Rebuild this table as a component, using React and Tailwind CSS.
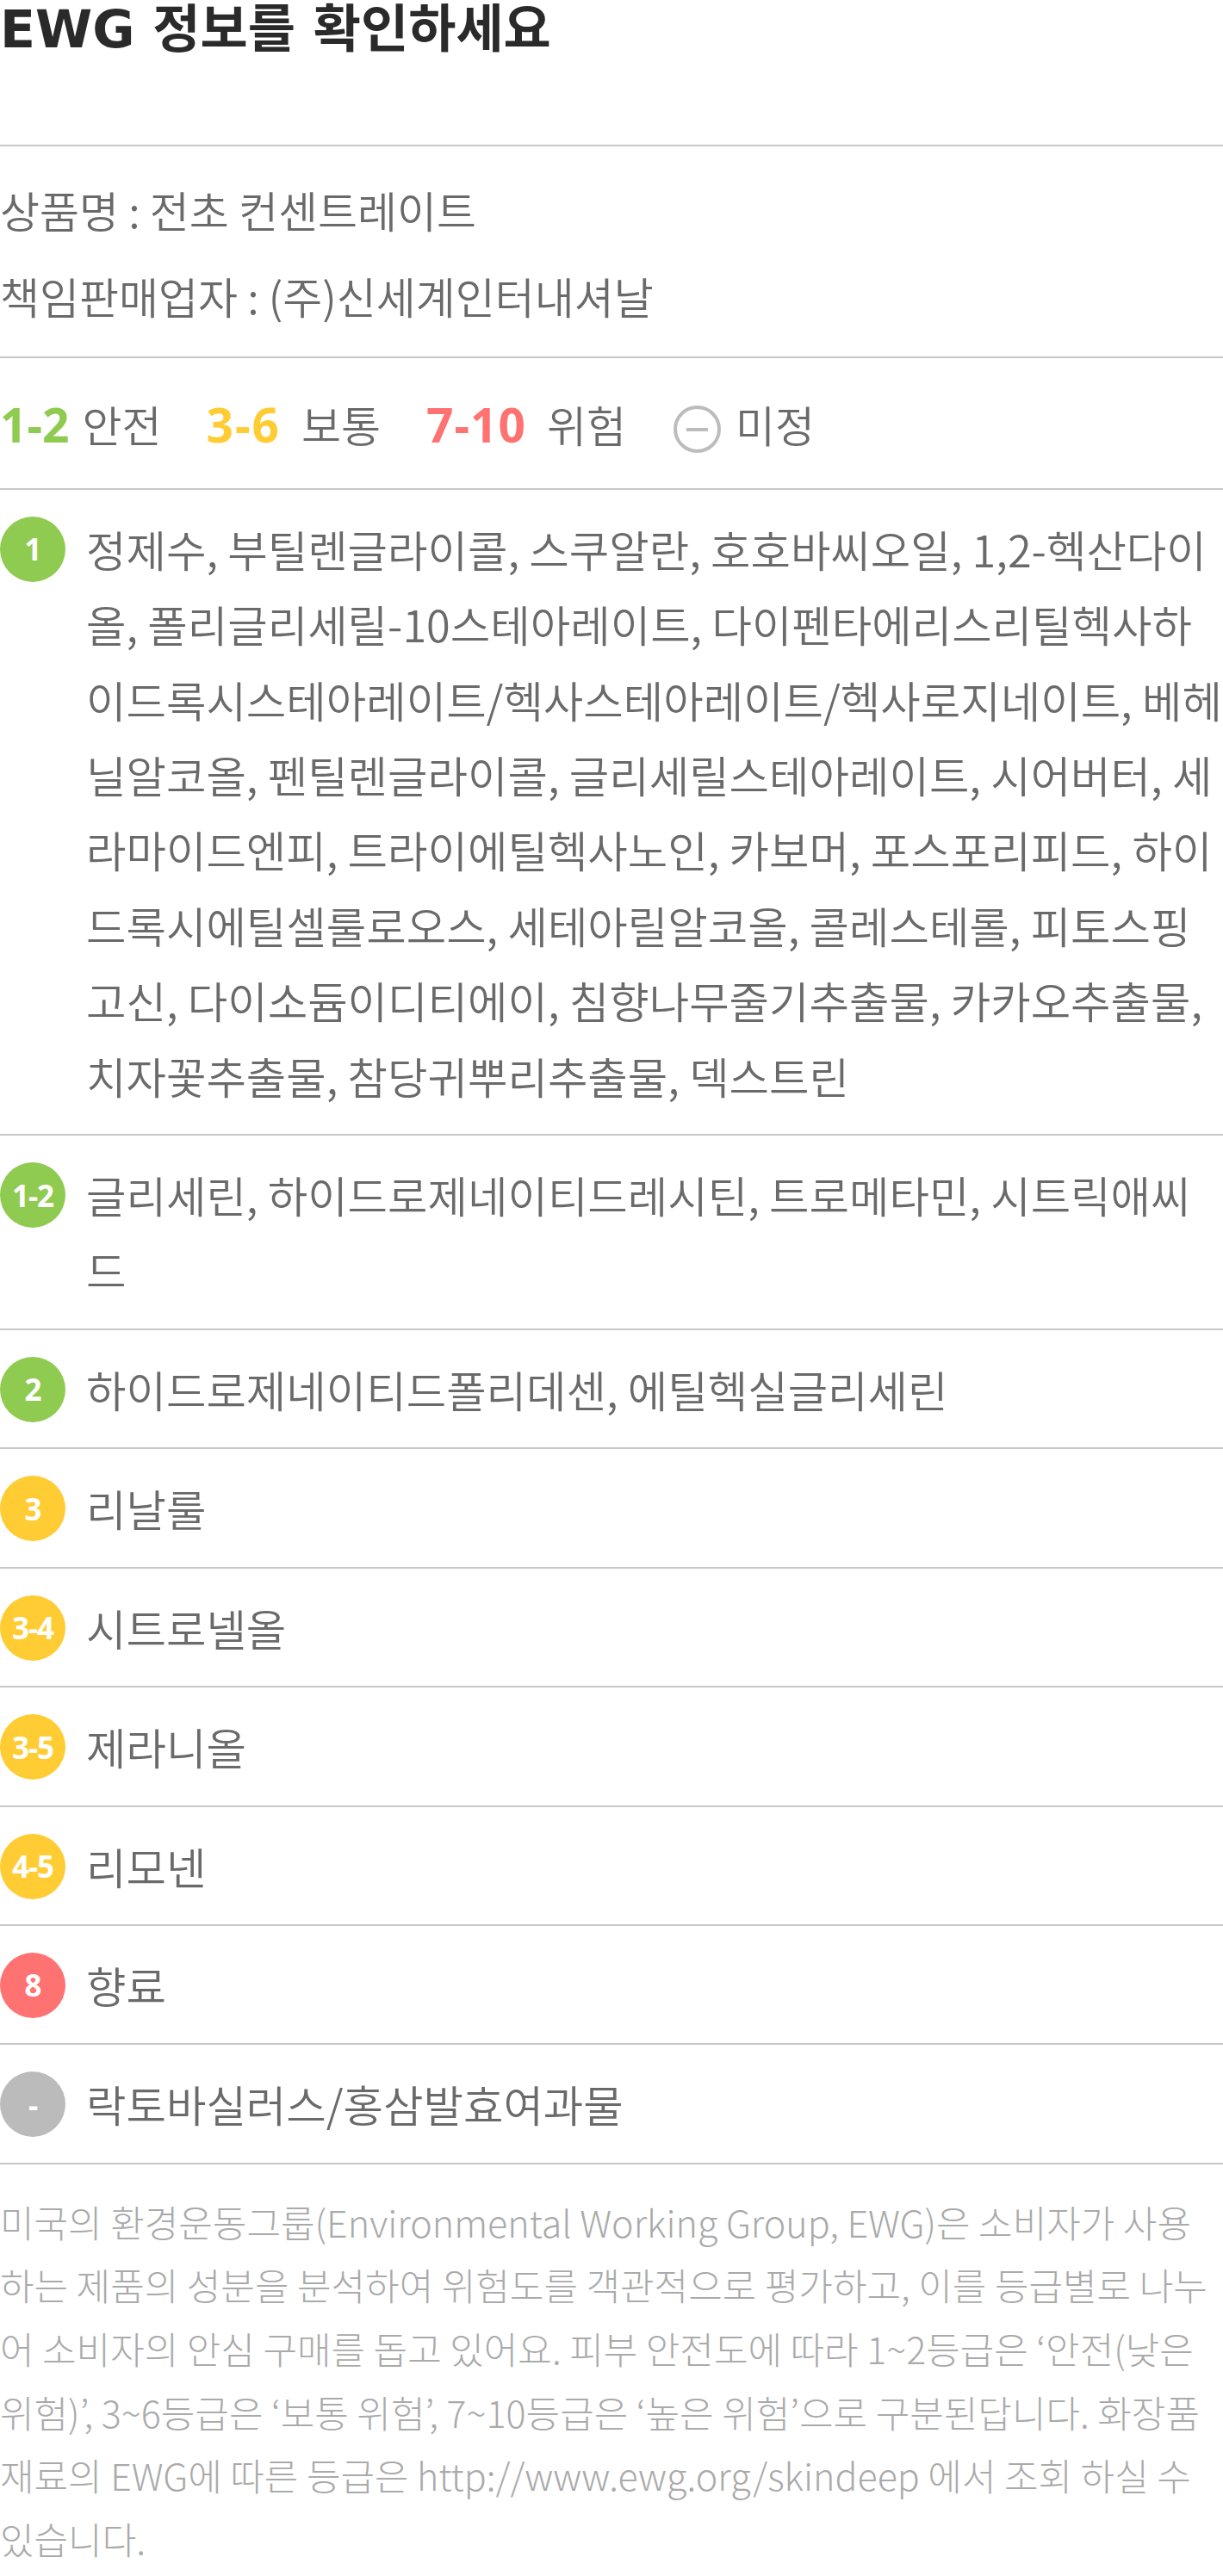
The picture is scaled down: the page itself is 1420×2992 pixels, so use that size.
import React from "react";

const GREEN = "bg-[#8fcb51]";
const YELLOW = "bg-[#ffcc33]";
const RED = "bg-[#ff7272]";
const GRAY = "bg-[#bbbbbb]";

const ingredients = [
  {
    grade: "1",
    color: GREEN,
    text: "정제수, 부틸렌글라이콜, 스쿠알란, 호호바씨오일, 1,2-헥산다이올, 폴리글리세릴-10스테아레이트, 다이펜타에리스리틸헥사하이드록시스테아레이트/헥사스테아레이트/헥사로지네이트, 베헤닐알코올, 펜틸렌글라이콜, 글리세릴스테아레이트, 시어버터, 세라마이드엔피, 트라이에틸헥사노인, 카보머, 포스포리피드, 하이드록시에틸셀룰로오스, 세테아릴알코올, 콜레스테롤, 피토스핑고신, 다이소듐이디티에이, 침향나무줄기추출물, 카카오추출물, 치자꽃추출물, 참당귀뿌리추출물, 덱스트린",
  },
  {
    grade: "1-2",
    color: GREEN,
    text: "글리세린, 하이드로제네이티드레시틴, 트로메타민, 시트릭애씨드",
  },
  { grade: "2", color: GREEN, text: "하이드로제네이티드폴리데센, 에틸헥실글리세린" },
  { grade: "3", color: YELLOW, text: "리날룰" },
  { grade: "3-4", color: YELLOW, text: "시트로넬올" },
  { grade: "3-5", color: YELLOW, text: "제라니올" },
  { grade: "4-5", color: YELLOW, text: "리모넨" },
  { grade: "8", color: RED, text: "향료" },
  { grade: "-", color: GRAY, text: "락토바실러스/홍삼발효여과물" },
];

const IngredientRow = ({ grade, color, text }) => (
  <div className="flex border-b-2 border-[#c8c8c8] pt-[25px] pb-[24px]">
    <div
      className={`${color} mt-[6px] flex h-[76px] w-[76px] shrink-0 items-center justify-center rounded-full font-['Noto_Sans',sans-serif] text-[35px] font-bold leading-none tracking-[-1px] text-white`}
    >
      {grade}
    </div>
    <p className="ml-[24px] min-w-0 flex-1 break-all text-[50.5px] font-[350] leading-[87.4px] text-[#6a6a6a]">
      {text}
    </p>
  </div>
);

const App = () => {
  return (
    <div className="w-full bg-white font-['Noto_Sans_CJK_KR','Noto_Sans',sans-serif]">
      <div className="h-[170px] border-b-2 border-[#c8c8c8]">
        <h1 className="font-['DejaVu_Sans','Noto_Sans_CJK_KR',sans-serif] text-[60px] font-bold leading-[68px] text-[#2a2a2a]">
          EWG 정보를 확인하세요
        </h1>
      </div>

      <div className="flex flex-col gap-[13px] border-b-2 border-[#c8c8c8] pt-[30px] pb-[26px] text-[50px] font-[350] leading-[87.4px] text-[#6a6a6a]">
        <p>상품명 : 전초 컨센트레이트</p>
        <p>책임판매업자 : (주)신세계인터내셔날</p>
      </div>

      <div className="flex h-[153px] items-center border-b-2 border-[#c8c8c8] pt-[2px]">
        <div className="text-[50px] font-[350] leading-[87px] text-[#6a6a6a]">
          <span className="font-['Noto_Sans',sans-serif] text-[55px] font-bold text-[#8fcb51]">1-2</span>
          <span className="ml-[15px]">안전</span>
          <span className="ml-[52px] font-['Noto_Sans',sans-serif] text-[55px] font-bold tracking-[2px] text-[#ffcc33]">3-6</span>
          <span className="ml-[24px]">보통</span>
          <span className="ml-[53px] font-['Noto_Sans',sans-serif] text-[55px] font-bold tracking-[1px] text-[#ff7272]">7-10</span>
          <span className="ml-[24px]">위험</span>
          <span className="ml-[55px] inline-flex h-[55px] w-[55px] items-center justify-center rounded-full border-4 border-[#bcbcbc] align-[13px]">
            <span className="block h-[4px] w-[25px] bg-[#bcbcbc]" />
          </span>
          <span className="ml-[17px]">미정</span>
        </div>
      </div>

      {ingredients.map((item) => (
        <IngredientRow key={item.grade} {...item} />
      ))}

      <p className="break-all pt-[30px] pb-[10px] text-[43px] font-light leading-[73.6px] text-[#aaaaaa]">
        미국의 환경운동그룹(Environmental Working Group, EWG)은 소비자가 사용하는 제품의 성분을 분석하여 위험도를 객관적으로 평가하고, 이를 등급별로 나누어 소비자의 안심 구매를 돕고 있어요. 피부 안전도에 따라 1~2등급은 ‘안전(낮은 위험)’, 3~6등급은 ‘보통 위험’, 7~10등급은 ‘높은 위험’으로 구분된답니다. 화장품 재료의 EWG에 따른 등급은 http://www.ewg.org/skindeep 에서 조회 하실 수 있습니다.
      </p>
    </div>
  );
};

export default App;
